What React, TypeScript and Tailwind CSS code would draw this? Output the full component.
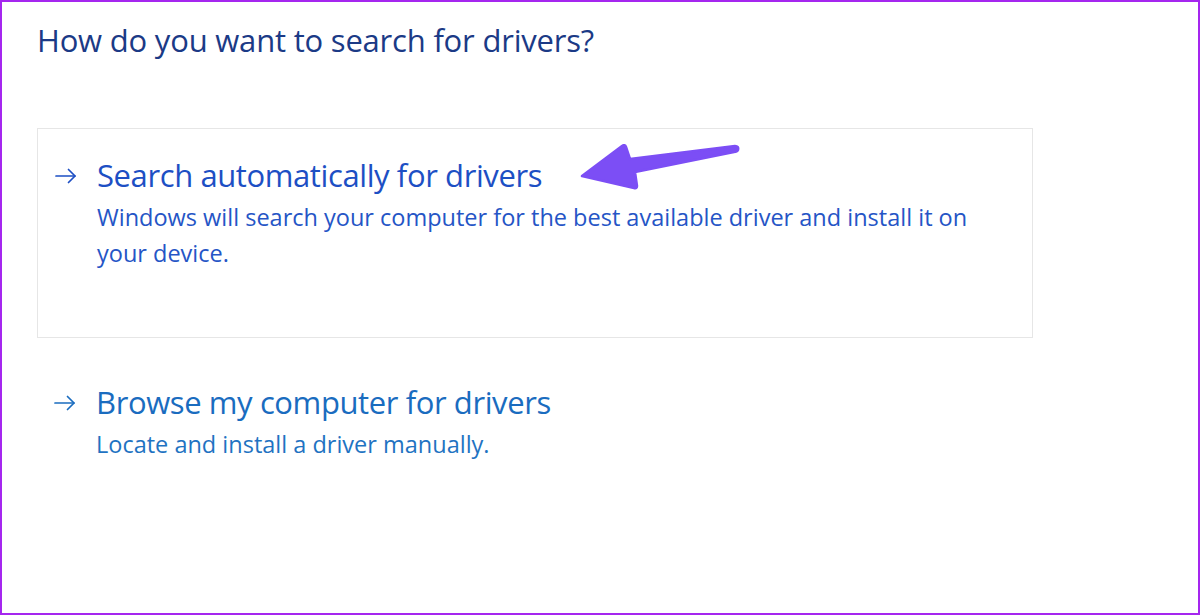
import React from 'react';

const font = { fontFamily: '"Open Sans", "Noto Sans", sans-serif' };

const ArrowRight = ({ color }: { color: string }) => (
  <svg width="22" height="16" viewBox="0 0 22 16" fill="none" stroke={color} strokeWidth="1.7" strokeLinecap="round" strokeLinejoin="round">
    <path d="M1 8h19" />
    <path d="M13.5 1.5 20 8l-6.5 6.5" />
  </svg>
);

const Option = ({
  title,
  desc,
  blue,
  boxed,
}: {
  title: string;
  desc: string;
  blue: 'deep' | 'light';
  boxed?: boolean;
}) => (
  <div
    className={`w-[996px] pl-[17px] pt-[24px] ${boxed ? 'h-[210px] border border-[#e6e6e6]' : ''}`}
  >
    <div className="flex items-center">
      <div className="w-[42px] flex items-center pt-[2px]">
        <ArrowRight color={blue === 'deep' ? '#1d4fc4' : '#1a6cbf'} />
      </div>
      <div
        className={`text-[31px] leading-[44px] tracking-[-0.4px] ${blue === 'deep' ? 'text-[#1d4fc4]' : 'text-[#1a6cbf]'}`}
      >
        {title}
      </div>
    </div>
    <div
      className={`mt-[2px] pl-[42px] max-w-[940px] text-[23.5px] leading-[36px] tracking-[0px] ${blue === 'deep' ? 'text-[#2555c6]' : 'text-[#1f73c2]'}`}
    >
      {desc}
    </div>
  </div>
);

export default function App() {
  return (
    <div style={font} className="w-[1200px] h-[615px] bg-white border-2 border-[#a526ef] overflow-hidden">
      <div className="pl-[35px] pt-[18px]">
        <h1 className="text-[31px] leading-[40px] text-[#1b3a86] tracking-[-0.2px]">
          How do you want to search for drivers?
        </h1>
        <div className="mt-[68px] relative">
          <Option
            boxed
            blue="deep"
            title="Search automatically for drivers"
            desc="Windows will search your computer for the best available driver and install it on your device."
          />
          {/* purple annotation arrow */}
          <svg
            className="absolute left-[542px] top-[16px]"
            width="162"
            height="46"
            viewBox="542 144 162 46"
          >
            <path
              d="M545 176 L585 146 Q588 144 589 147 L593 159 L698 146 Q702 146 701 150 Q700 152 697 152 L598 172 L600 186 Q600 189 597 188 Z"
              fill="#7c4ef5"
              stroke="#7c4ef5"
              strokeWidth="2.5"
              strokeLinejoin="round"
            />
          </svg>
        </div>
        <div className="mt-[18px]">
          <Option
            blue="light"
            title="Browse my computer for drivers"
            desc="Locate and install a driver manually."
          />
        </div>
      </div>
    </div>
  );
}
